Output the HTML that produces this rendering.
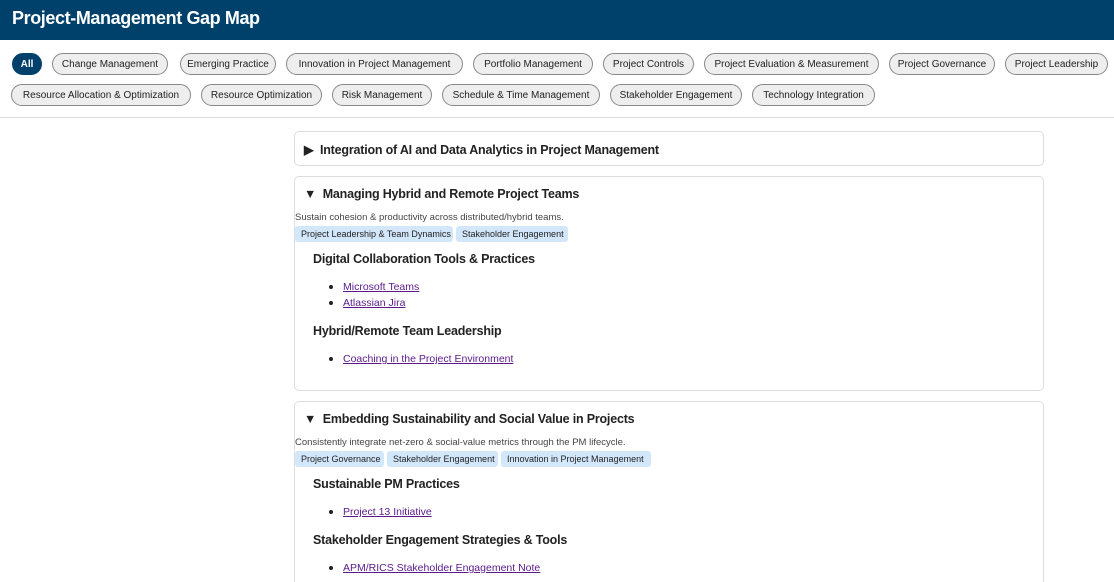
<!DOCTYPE html>
<html><head><meta charset="utf-8"><style>
*{box-sizing:border-box;margin:0;padding:0}
html,body{width:1114px;height:582px;overflow:hidden}
body{background:#fff;font-family:"Liberation Sans",Arial,sans-serif;color:#222;position:relative}
.hdr{position:absolute;left:0;top:0;width:1114px;height:40px;background:#00416b}
.hdr h1{position:absolute;left:12px;top:8px;font-size:18px;font-weight:bold;color:#fff;letter-spacing:-0.4px}
.bar{position:absolute;left:0;top:40px;width:1114px;height:78px;border-bottom:1px solid #ddd}
.pill{position:absolute;height:22px;border:1px solid #888;border-radius:11px;background:#eee;font-size:10px;display:flex;align-items:center;justify-content:center;padding-top:1px;color:#222;white-space:nowrap}
.pill.on{background:#00416b;border-color:#00416b;color:#fff;font-weight:bold}
.card{position:absolute;left:294px;width:750px;border:1px solid #ddd;border-radius:5px;background:#fff}
.t{position:absolute;white-space:nowrap}
.sum{font-size:12.5px;font-weight:bold;color:#222;letter-spacing:-0.2px}
.desc{font-size:9.5px;color:#444}
.tag{position:absolute;height:16px;background:#d3e7fb;border-radius:3px;font-size:9px;line-height:17px;padding:0 6px;color:#222;white-space:nowrap}
.h3{font-size:12.5px;font-weight:bold;color:#222;letter-spacing:-0.2px}
.li{font-size:10.5px;color:#5a1a8c;text-decoration:underline}
.dot{position:absolute;width:4px;height:4px;border-radius:2px;background:#222}
</style></head><body>
<div class="hdr"><h1>Project-Management Gap Map</h1></div>
<div class="bar"></div>
<div class="pill on" style="left:12px;top:53px;width:30px">All</div>
<div class="pill" style="left:52px;top:53px;width:116px">Change Management</div>
<div class="pill" style="left:180px;top:53px;width:96px">Emerging Practice</div>
<div class="pill" style="left:286px;top:53px;width:177px">Innovation in Project Management</div>
<div class="pill" style="left:473px;top:53px;width:120px">Portfolio Management</div>
<div class="pill" style="left:603px;top:53px;width:91px">Project Controls</div>
<div class="pill" style="left:704px;top:53px;width:175px">Project Evaluation &amp; Measurement</div>
<div class="pill" style="left:889px;top:53px;width:106px">Project Governance</div>
<div class="pill" style="left:1005px;top:53px;width:103px">Project Leadership</div>
<div class="pill" style="left:11px;top:84px;width:180px">Resource Allocation &amp; Optimization</div>
<div class="pill" style="left:201px;top:84px;width:121px">Resource Optimization</div>
<div class="pill" style="left:332px;top:84px;width:100px">Risk Management</div>
<div class="pill" style="left:442px;top:84px;width:158px">Schedule &amp; Time Management</div>
<div class="pill" style="left:610px;top:84px;width:132px">Stakeholder Engagement</div>
<div class="pill" style="left:752px;top:84px;width:123px">Technology Integration</div>

<div class="card" style="top:131px;height:35px"></div>
<div class="t sum" style="left:304px;top:142px">▶&nbsp;&nbsp;Integration of AI and Data Analytics in Project Management</div>

<div class="card" style="top:176px;height:215px"></div>
<div class="t sum" style="left:304px;top:187px">▼&nbsp;&nbsp;Managing Hybrid and Remote Project Teams</div>
<div class="t desc" style="left:295px;top:212px">Sustain cohesion &amp; productivity across distributed/hybrid teams.</div>
<div class="tag" style="left:295px;top:226px;width:158px">Project Leadership &amp; Team Dynamics</div>
<div class="tag" style="left:456px;top:226px;width:112px">Stakeholder Engagement</div>
<div class="t h3" style="left:313px;top:252px">Digital Collaboration Tools &amp; Practices</div>
<div class="dot" style="left:329px;top:285px"></div><div class="t li" style="left:343px;top:281px">Microsoft Teams</div>
<div class="dot" style="left:329px;top:301px"></div><div class="t li" style="left:343px;top:297px">Atlassian Jira</div>
<div class="t h3" style="left:313px;top:324px">Hybrid/Remote Team Leadership</div>
<div class="dot" style="left:329px;top:357px"></div><div class="t li" style="left:343px;top:353px">Coaching in the Project Environment</div>

<div class="card" style="top:401px;height:200px"></div>
<div class="t sum" style="left:304px;top:412px">▼&nbsp;&nbsp;Embedding Sustainability and Social Value in Projects</div>
<div class="t desc" style="left:295px;top:437px">Consistently integrate net-zero &amp; social-value metrics through the PM lifecycle.</div>
<div class="tag" style="left:295px;top:451px;width:89px">Project Governance</div>
<div class="tag" style="left:387px;top:451px;width:111px">Stakeholder Engagement</div>
<div class="tag" style="left:501px;top:451px;width:150px">Innovation in Project Management</div>
<div class="t h3" style="left:313px;top:477px">Sustainable PM Practices</div>
<div class="dot" style="left:329px;top:510px"></div><div class="t li" style="left:343px;top:506px">Project 13 Initiative</div>
<div class="t h3" style="left:313px;top:533px">Stakeholder Engagement Strategies &amp; Tools</div>
<div class="dot" style="left:329px;top:566px"></div><div class="t li" style="left:343px;top:562px">APM/RICS Stakeholder Engagement Note</div>
</body></html>
